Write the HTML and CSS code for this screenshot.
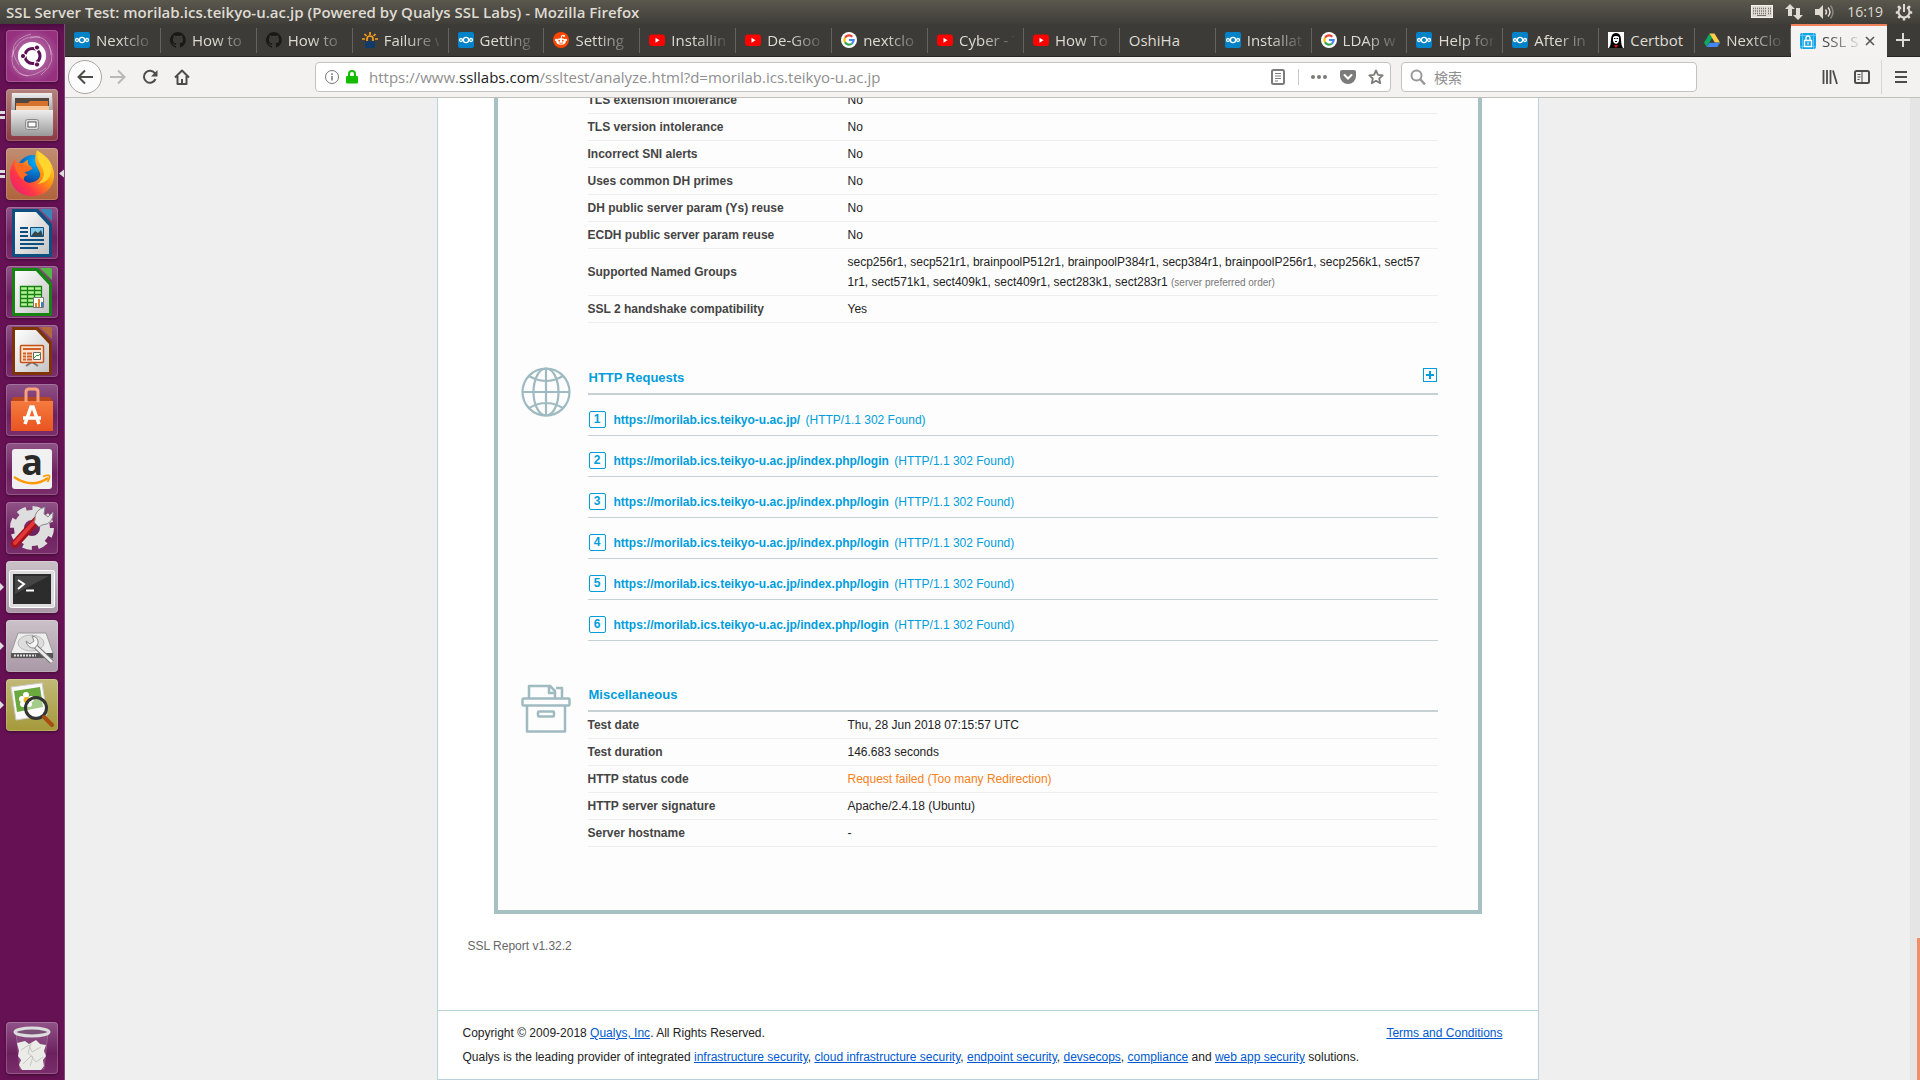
FILE: index.html
```html
<!DOCTYPE html>
<html lang="en">
<head>
<meta charset="utf-8">
<title>SSL Server Test: morilab.ics.teikyo-u.ac.jp (Powered by Qualys SSL Labs)</title>
<link rel="stylesheet" href="styles.css">
</head>
<body>
<svg class="defs" aria-hidden="true">
  <defs>
    <linearGradient id="paper" x1="0" y1="0" x2="1" y2="1"><stop offset="0" stop-color="#fff"/><stop offset="1" stop-color="#c4c4c4"/></linearGradient>
    <linearGradient id="metal" x1="0" y1="0" x2="0" y2="1"><stop offset="0" stop-color="#eee"/><stop offset="1" stop-color="#999"/></linearGradient>
    <linearGradient id="fox" x1="1" y1="0" x2="0" y2="1"><stop offset="0" stop-color="#fff44f"/><stop offset=".4" stop-color="#ff980e"/><stop offset=".7" stop-color="#ff3647"/><stop offset="1" stop-color="#e31587"/></linearGradient>
    <radialGradient id="globeblue" cx=".6" cy=".2" r=".9"><stop offset="0" stop-color="#00b4ff"/><stop offset="1" stop-color="#10217f"/></radialGradient>
    <linearGradient id="bag" x1="0" y1="0" x2="0" y2="1"><stop offset="0" stop-color="#f47b3e"/><stop offset="1" stop-color="#e95420"/></linearGradient>
  </defs>
  <symbol id="fav-nextcloud" viewBox="0 0 16 16"><rect width="16" height="16" rx="2" fill="#0082c9"/><g fill="none" stroke="#fff" stroke-width="1.3"><circle cx="8" cy="8" r="2.6"/><circle cx="3" cy="8" r="1.5"/><circle cx="13" cy="8" r="1.5"/></g></symbol>
  <symbol id="fav-github" viewBox="0 0 16 16"><path fill="#1b1817" d="M8 0a8 8 0 0 0-2.5 15.6c.4.1.5-.2.5-.4v-1.400c-2.200.5-2.700-1-2.700-1-.4-.9-.9-1.200-.9-1.200-.7-.5.1-.5.1-.5.8.1 1.200.8 1.200.8.7 1.300 1.900.9 2.300.7.1-.5.3-.9.5-1.100-1.800-.2-3.600-.9-3.600-4 0-.9.3-1.600.8-2.100-.1-.2-.4-1 .1-2.100 0 0 .7-.2 2.200.8a7.500 7.500 0 0 1 4 0c1.500-1 2.200-.8 2.200-.8.4 1.100.2 1.900.1 2.100.5.600.8 1.300.8 2.100 0 3.100-1.900 3.700-3.700 3.900.3.3.6.8.6 1.500v2.200c0 .2.1.5.6.4A8 8 0 0 0 8 0z"/></symbol>
  <symbol id="fav-youtube" viewBox="0 0 16 16"><rect y="2.500" width="16" height="11.500" rx="3" fill="#f00"/><path d="M6.500 5.700v5l4-2.500z" fill="#fff"/></symbol>
  <symbol id="fav-google" viewBox="0 0 16 16"><circle cx="8" cy="8" r="8" fill="#fff"/><g fill="none" stroke-width="2.200"><path stroke="#ea4335" d="M4 5.700A4.700 4.700 0 0 1 11.300 4.700"/><path stroke="#fbbc05" d="M4 5.700A4.700 4.700 0 0 0 4 10.400"/><path stroke="#34a853" d="M4 10.400A4.700 4.700 0 0 0 11 11.500"/><path stroke="#4285f4" d="M11 11.500A4.700 4.700 0 0 0 12.600 8H8"/></g></symbol>
</svg>

<header class="menubar">
  <h1 class="menubar-title">SSL Server Test: morilab.ics.teikyo-u.ac.jp (Powered by Qualys SSL Labs) - Mozilla Firefox</h1>
  <div class="indicators">
    <svg width="22" height="14" viewBox="0 0 22 14"><rect x=".5" y=".5" width="21" height="12" fill="#dfdbd2" stroke="#f4f2ee"/><path stroke="#77746c" stroke-dasharray="1 1" stroke-width="1.500" d="M2 3.500h14M2 6h14M2 8.500h14M17 3.500h3M17 6h3M17 8.500h3"/><path stroke="#77746c" d="M6 10.500h9"/></svg>
    <svg width="18" height="18" viewBox="0 0 18 18" fill="#dfdbd2"><path d="M5 1 0 6h3v7h4V6h3zM13 17l5-5h-3V5h-4v7H8z"/></svg>
    <svg width="20" height="16" viewBox="0 0 20 16"><path fill="#dfdbd2" d="M0 5h4l4-4v14l-4-4H0z"/><g fill="none" stroke="#dfdbd2" stroke-width="1.500"><path d="M10.500 5.500q2 2.500 0 5M13 3.500q4 4.500 0 9"/><path stroke="#8a877f" d="M15.500 1.500q5 6.500 0 13"/></g></svg>
    <time class="clock">16:19</time>
    <svg width="18" height="18" viewBox="0 0 18 18" fill="none" stroke="#dfdbd2"><path stroke-width="2" d="M6 4.300a5.500 5.500 0 1 0 6 0M9 1v8"/><path stroke-width="2.500" d="M4.800 5 3 3.200M13.200 5 15 3.200M3.500 9.500H.8M14.500 9.500h2.700M5 13.200 3.300 15M13 13.200l1.700 1.800M9 15v2.500"/></svg>
  </div>
</header>

<div class="desktop">
  <nav class="launcher" aria-label="Launcher">
    <button class="tile tile-dash" aria-label="Search"><svg viewBox="0 0 52 52"><g fill="none" stroke="#fff" stroke-opacity=".35"><path d="M13 35Q-3 12 25 4M22 46Q2 44 7 20M40 38Q18 54 8 36M43 15q9 17-8 30M24 8q19-5 21 17M6 27Q12 4 34 7"/></g><circle cx="26" cy="26" r="14" fill="#fff"/><circle cx="26.500" cy="26" r="7.500" fill="none" stroke="#5e1155" stroke-width="3" stroke-dasharray="13.500 2.200" stroke-dashoffset="6"/><g fill="#5e1155" stroke="#fff"><circle cx="17" cy="26" r="2.600"/><circle cx="31" cy="17.500" r="2.600"/><circle cx="31" cy="34.500" r="2.600"/></g></svg></button>
    <button class="tile tile-files pips" aria-label="Files"><svg viewBox="0 0 52 52"><path d="M6 4h40l1 20H5z" fill="url(#metal)"/><path d="M9 9h34v14H9z" fill="#514740"/><path d="M10 14h12l2-2h18v11H10z" fill="#d5722c"/><path d="M10 17h33v5H10z" fill="#f7c799"/><path d="M5 21h42v24a2 2 0 0 1-2 2H7a2 2 0 0 1-2-2z" fill="url(#metal)"/><rect x="19.500" y="30.500" width="13" height="10" rx="2" fill="#ddd" stroke="#888"/><rect x="22" y="33" width="8" height="5" fill="#fff" stroke="#555"/></svg></button>
    <button class="tile tile-firefox pips" aria-label="Firefox"><svg viewBox="0 0 52 52"><circle cx="27" cy="23" r="16" fill="url(#globeblue)"/><path fill="url(#fox)" d="M32 3c8 5 15 12 16 22 1 14-9 23-22 23S4 39 4 26c0-7 3-11 5-16l1 6 7-1c2-1 3-3 5-3-1 3 1 6 4 7-2 2-6 2-7 5l-3 5c2 5 7 7 11 5 5-1 8-5 7-9-1-5-8-10-3-23z"/><path fill="#ff6b22" d="M8 16q7-3 10 1l9 3q-4 4-9 4l4 3q-5 1-4 5-6-2-10-16z"/><path fill="#ffd52e" d="M32 3c-3 10 5 14 6 22 0 5-3 9-7 11 11-1 16-9 14-20-2-6-8-9-13-13z"/><path fill="#ddd" d="M58 21.500v8L53 25.500z"/></svg></button>
    <button class="tile" aria-label="LibreOffice Writer"><svg viewBox="0 0 52 52"><path d="M6 2h26l14 15v31a2 2 0 0 1-2 2H8a2 2 0 0 1-2-2z" fill="#0d4f7e"/><path d="M9 5h21l13 14v28H9z" fill="url(#paper)"/><path d="M34 2h10a2 2 0 0 1 2 2v10z" fill="#3986b8"/><path stroke="#0d4f7e" stroke-width="2" d="M14 21h8M14 25h8M14 29h8M14 33h24M14 37h24M14 41h18"/><path d="M24.500 20.500h13v9h-13z" fill="#85c9ea" stroke="#0d4f7e"/><path d="m25 29 4-5 3 2 3-3 2 6z" fill="#33474a"/></svg></button>
    <button class="tile" aria-label="LibreOffice Calc"><svg viewBox="0 0 52 52"><path d="M6 2h26l14 15v31a2 2 0 0 1-2 2H8a2 2 0 0 1-2-2z" fill="#178312"/><path d="M9 5h21l13 14v28H9z" fill="url(#paper)"/><path d="M34 2h10a2 2 0 0 1 2 2v10z" fill="#55b744"/><path fill="#b7f19a" stroke="#178312" stroke-width="1.300" d="M14.500 20.500h21v20h-21zM21.500 20.500v20M28.500 20.500v20M14.500 24.500h21M14.500 28.500h21M14.500 32.500h21M14.500 36.500h21"/><path fill="#fff" stroke="#777" d="M27.500 31.500h10v10h-10z"/><path fill="#e77c20" d="M29 37h2v4h-2zM32 33h2v8h-2z"/><path fill="#2e86c1" d="M35 36h2v5h-2z"/></svg></button>
    <button class="tile" aria-label="LibreOffice Impress"><svg viewBox="0 0 52 52"><path d="M6 2h26l14 15v31a2 2 0 0 1-2 2H8a2 2 0 0 1-2-2z" fill="#7f3408"/><path d="M9 5h21l13 14v28H9z" fill="url(#paper)"/><path d="M34 2h10a2 2 0 0 1 2 2v10z" fill="#b5683b"/><path d="M20 41l6-4 6 4" stroke="#777" stroke-width="2" fill="none"/><rect x="14.500" y="20.500" width="23" height="17" rx="1" fill="#fbe3cf" stroke="#c4511a" stroke-width="1.500"/><path stroke="#d0602a" stroke-width="2" d="M17 24h18M17 28.500h3M21 28.500h5M17 31.500h3M21 31.500h5M17 34.500h3M21 34.500h5"/><path fill="#fff" stroke="#666" d="M27.500 27.500h7v7h-7z"/><path d="m28 33 3-3 1 1 3-3" stroke="#2a9b30" fill="none"/></svg></button>
    <button class="tile" aria-label="Ubuntu Software"><svg viewBox="0 0 52 52"><path d="M7 13 5 18h42l-3-5z" fill="#b9471d"/><path d="M5 17h42v30H5z" fill="url(#bag)"/><path d="M20 18V8q0-3 3-3h6q3 0 3 3v10" fill="none" stroke="#f7a27c" stroke-width="3"/><g fill="none" stroke="#fff" stroke-width="3.500"><path d="m19 40 6-17h2l6 17"/><path d="M17 34h18"/></g></svg></button>
    <button class="tile" aria-label="Amazon"><svg viewBox="0 0 52 52"><rect x="6" y="6" width="40" height="40" rx="3" fill="#f1f1f1"/><text x="26" y="32" class="amazon-a" text-anchor="middle">a</text><path d="M8 34q18 12 34 1" fill="none" stroke="#f90" stroke-width="2.500"/><path d="M37 33.500q6-2 6.500-.5t-2 6" fill="none" stroke="#f90" stroke-width="1.800"/></svg></button>
    <button class="tile" aria-label="System Settings"><svg viewBox="0 0 52 52"><circle cx="26" cy="26" r="19.500" fill="none" stroke="#dedede" stroke-width="5" stroke-dasharray="9 6.300"/><circle cx="26" cy="26" r="13" fill="none" stroke="#dedede" stroke-width="10"/><path d="m9 42 23-25" stroke="#a5131b" stroke-width="8" stroke-linecap="round"/><path d="m9 41 22-24" stroke="#e0383b" stroke-width="4" stroke-linecap="round"/><path d="M29 18q-1-10 10-13l-1 7 4 3 5-5q1 12-11 13l-3 2-5-5z" fill="#e6e6e6" stroke="#8a8a8a"/></svg></button>
    <button class="tile tile-grey pip" aria-label="Terminal"><svg viewBox="0 0 52 52"><rect x="3.500" y="9.500" width="45" height="37" rx="2" fill="#ddd" stroke="#fff"/><path d="M7 13h38v30H7z" fill="#2c2c2c"/><path d="M9 15h34L9 33z" fill="#454545"/><path d="m12 19 6 4-6 5M20 29.500h8" fill="none" stroke="#fff" stroke-width="2"/></svg></button>
    <button class="tile tile-grey pip" aria-label="Disks"><svg viewBox="0 0 52 52"><path d="m12 13h28l7 20v5H5v-5z" fill="#eee" stroke="#999"/><path d="M5 33h42v5H5z" fill="#555"/><path d="M8 35.500h22" stroke="#ddd" stroke-width="2" stroke-dasharray="2 1"/><ellipse cx="25" cy="23" rx="13" ry="8" fill="#ddd" stroke="#bbb"/><path d="m29 26 17 16" stroke="#777" stroke-width="5"/><path d="m29 26 17 16" stroke="#eee" stroke-width="3"/><path d="M20 21q2 8 9 7l3-4q1-7-6-8l2 5-4 3z" fill="#f4f4f4" stroke="#888"/></svg></button>
    <button class="tile tile-olive pip" aria-label="Image Viewer"><svg viewBox="0 0 52 52"><path d="m5 8 31-4 5 32-31 5z" fill="#fafafa" stroke="#ccc"/><path d="m8 12 26-4 3 20-26 5z" fill="#69a93d"/><g fill="#fff"><circle cx="16" cy="20" r="3"/><circle cx="20" cy="16" r="3"/><circle cx="25" cy="20" r="3"/><circle cx="23" cy="25" r="3"/><circle cx="17" cy="25" r="3"/></g><circle cx="20.500" cy="21" r="3" fill="#eeb51f"/><circle cx="30" cy="29" r="10.500" fill="#fff" fill-opacity=".4" stroke="#333" stroke-width="3"/><path d="m38 38 8 8" stroke="#a74d13" stroke-width="4" stroke-linecap="round"/></svg></button>
    <button class="tile tile-trash" aria-label="Trash"><svg viewBox="0 0 52 52"><path d="M10 10h32l-4 37H14z" fill="#fff" fill-opacity=".08" stroke="#fff" stroke-opacity=".2"/><path d="m11 21 8-2 4 3 7-4 4 4 6 1-2 6 2 5-3 4 1 6-3 4H16l-3-5 2-5-3-4 1-5z" fill="#ebebe8"/><path d="m15 28 8-5 3 7 9-5M17 42l8-8 5 6 7-5M25 21l-3 10 5 4-3 9" stroke="#c6c6c3" fill="none"/><ellipse cx="26" cy="10" rx="17" ry="4" fill="#7a5278" stroke="#ddd" stroke-width="3"/></svg></button>
  </nav>

  <div class="browser">
    <div class="tabs" role="tablist">
      <button class="tab" role="tab"><svg class="fav"><use href="#fav-nextcloud"/></svg><span>Nextclo</span></button>
      <button class="tab" role="tab"><svg class="fav"><use href="#fav-github"/></svg><span>How to</span></button>
      <button class="tab" role="tab"><svg class="fav"><use href="#fav-github"/></svg><span>How to</span></button>
      <button class="tab" role="tab"><svg class="fav" viewBox="0 0 16 16"><path fill="#123a69" d="M3 9h10v7H3z"/><path fill="none" stroke="#f9a01b" stroke-width="1.700" d="M5 9V7a3 3 0 0 1 6 0v2M8 3V0M4.500 4 2.500 2M11.500 4l2-2M3 7H0M13 7h3"/></svg><span>Failure w</span></button>
      <button class="tab" role="tab"><svg class="fav"><use href="#fav-nextcloud"/></svg><span>Getting</span></button>
      <button class="tab" role="tab"><svg class="fav" viewBox="0 0 16 16"><circle cx="8" cy="8" r="8" fill="#ff4500"/><ellipse cx="8" cy="9.500" rx="4.700" ry="3.300" fill="#fff"/><g fill="#fff"><circle cx="3.200" cy="8" r="1.300"/><circle cx="12.800" cy="8" r="1.300"/><circle cx="11" cy="3.800" r="1.100"/></g><path stroke="#fff" fill="none" d="M8 7l.7-3.500 2 .4"/><g fill="#ff4500"><circle cx="6.200" cy="8.700" r=".9"/><circle cx="9.800" cy="8.700" r=".9"/></g><path stroke="#ff4500" fill="none" stroke-width=".8" d="M6 10.800q2 1.200 4 0"/></svg><span>Setting</span></button>
      <button class="tab" role="tab"><svg class="fav"><use href="#fav-youtube"/></svg><span>Installin</span></button>
      <button class="tab" role="tab"><svg class="fav"><use href="#fav-youtube"/></svg><span>De-Goo</span></button>
      <button class="tab" role="tab"><svg class="fav"><use href="#fav-google"/></svg><span>nextclo</span></button>
      <button class="tab" role="tab"><svg class="fav"><use href="#fav-youtube"/></svg><span>Cyber - T</span></button>
      <button class="tab" role="tab"><svg class="fav"><use href="#fav-youtube"/></svg><span>How To</span></button>
      <button class="tab" role="tab"><span class="whole">OshiHa</span></button>
      <button class="tab" role="tab"><svg class="fav"><use href="#fav-nextcloud"/></svg><span>Installat</span></button>
      <button class="tab" role="tab"><svg class="fav"><use href="#fav-google"/></svg><span>LDAp w</span></button>
      <button class="tab" role="tab"><svg class="fav"><use href="#fav-nextcloud"/></svg><span>Help for</span></button>
      <button class="tab" role="tab"><svg class="fav"><use href="#fav-nextcloud"/></svg><span>After in</span></button>
      <button class="tab" role="tab"><svg class="fav" viewBox="0 0 16 16"><path fill="#fff" d="M0 0h16v16H0z"/><path d="M1 16q2-3 2-8 0-7 5-7t5 7q0 5 2 8z"/><path fill="#fff" d="M5 5q3-2 6 0v4q-1 3-3 3t-3-3z"/><path stroke="#000" d="M6 6.500h1.500M8.500 6.500H10M7 9.500h2"/><path fill="#e11" d="M6 13h4l-2 3z"/></svg><span class="whole">Certbot</span></button>
      <button class="tab" role="tab"><svg class="fav" viewBox="0 0 16 16"><path fill="#0da960" d="m5.500 1.500 2.600 4.600L2.700 15 0 10.700z"/><path fill="#ffcf48" d="M5.500 1.500h5l5.500 9h-5.200z"/><path fill="#4285f4" d="M5.500 10.700H16L13.400 15H2.700z"/></svg><span>NextClo</span></button>
      <button class="tab selected" role="tab" aria-selected="true"><svg class="fav" viewBox="0 0 16 16"><rect width="16" height="16" rx="2" fill="#12a5e8"/><path stroke="#58c4f2" d="M2.500 0v16M13.500 0v16M0 2.500h16M0 13.500h16"/><path fill="none" stroke="#fff" stroke-width="1.400" d="M4.500 7.500h7v6h-7zM6 7V5a2 2 0 0 1 4 0v2M8 9.500v2"/></svg><span>SSL S</span><svg width="12" height="10" viewBox="0 0 12 10"><path d="m1 1 8 8M9 1 1 9" stroke="#555" stroke-width="1.600"/></svg></button>
      <button class="newtab" aria-label="New tab"><svg width="14" height="14" viewBox="0 0 14 14"><path d="M7 0v14M0 7h14" stroke="#dcdad5" stroke-width="2"/></svg></button>
    </div>

    <div class="toolbar">
      <button class="back" aria-label="Back"><svg width="16" height="16" viewBox="0 0 16 16"><path d="M8 1.500 1.500 8 8 14.500M2 8h14" stroke="#4c4c4a" stroke-width="2" fill="none"/></svg></button>
      <button class="tool" aria-label="Forward"><svg width="16" height="16" viewBox="0 0 16 16"><path d="M8 1.500 14.500 8 8 14.500M14 8H0" stroke="#b9b8b5" stroke-width="2" fill="none"/></svg></button>
      <button class="tool" aria-label="Reload"><svg width="16" height="16" viewBox="0 0 16 16"><path d="M13 4.500A6 6 0 1 0 13.500 10" stroke="#4c4c4a" stroke-width="2" fill="none"/><path d="M15.500 1v6.500H9z" fill="#4c4c4a"/></svg></button>
      <button class="tool" aria-label="Home"><svg width="16" height="16" viewBox="0 0 16 16"><path d="m1 8.500 7-7 7 7M3.500 7v8h9V7" stroke="#4c4c4a" stroke-width="2" fill="none" stroke-linejoin="round"/><path d="M7 10h2v5H7z" fill="#4c4c4a"/></svg></button>
      <div class="field urlbar">
        <svg width="16" height="16" viewBox="0 0 16 16"><circle cx="8" cy="8" r="6.500" fill="none" stroke="#777"/><path d="M8 7v4.500M8 4.300V6" stroke="#777" stroke-width="1.500"/></svg>
        <svg width="14" height="16" viewBox="0 0 14 16"><path d="M4 8V5a3 3 0 0 1 6 0v3" fill="none" stroke="#12bc00" stroke-width="2"/><rect x="1" y="7" width="12" height="7.500" rx="1" fill="#12bc00"/></svg>
        <a class="url" href="#">https://www.<b>ssllabs.com</b>/ssltest/analyze.html?d=morilab.ics.teikyo-u.ac.jp</a>
        <button class="mini reader" aria-label="Reader view"><svg width="16" height="16" viewBox="0 0 16 16"><rect x="2" y="1" width="12" height="14" rx="1.500" fill="none" stroke="#7b7b7a" stroke-width="2"/><path d="M5 4.500h6M5 7h6M5 9.500h6M5 12h3" stroke="#7b7b7a"/></svg></button>
        <button class="mini" aria-label="Page actions"><svg width="18" height="16" viewBox="0 0 18 16" fill="#7b7b7a"><circle cx="3" cy="8" r="2"/><circle cx="9" cy="8" r="2"/><circle cx="15" cy="8" r="2"/></svg></button>
        <button class="mini" aria-label="Save to Pocket"><svg width="16" height="16" viewBox="0 0 16 16"><path d="M2 1h12a2 2 0 0 1 2 2v4a8 8 0 0 1-16 0V3a2 2 0 0 1 2-2z" fill="#7b7b7a"/><path d="m4.500 6 3.500 3.500L11.500 6" fill="none" stroke="#fff" stroke-width="2" stroke-linecap="round"/></svg></button>
        <button class="mini" aria-label="Bookmark"><svg width="16" height="16" viewBox="0 0 16 16"><path d="m8 1.500 2 4.300 4.700.5-3.500 3.200 1 4.700L8 11.800l-4.200 2.400 1-4.700-3.500-3.200 4.700-.5z" fill="none" stroke="#7b7b7a" stroke-width="1.800" stroke-linejoin="round"/></svg></button>
      </div>
      <label class="field search">
        <svg width="16" height="16" viewBox="0 0 16 16"><circle cx="6.500" cy="6.500" r="5" fill="none" stroke="#999" stroke-width="2"/><path d="m10 10 5 5.500" stroke="#999" stroke-width="2.500"/></svg>
        <input type="search" placeholder="検索" aria-label="検索">
      </label>
      <button class="tool library" aria-label="Library"><svg width="16" height="16" viewBox="0 0 16 16"><path d="M1.500 1v14M5 1v14M8.500 1v14M11 1.500 15 15" stroke="#4c4c4a" stroke-width="1.800"/></svg></button>
      <button class="tool" aria-label="Sidebars"><svg width="16" height="16" viewBox="0 0 16 16"><rect x="1" y="2" width="14" height="12" rx="1.500" fill="none" stroke="#4c4c4a" stroke-width="2"/><path d="M8 2v12M3.500 5.500h3M3.500 8h3M3.500 10.500h2" stroke="#4c4c4a"/></svg></button>
      <button class="menu" aria-label="Menu"><svg width="14" height="14" viewBox="0 0 14 14"><path d="M1 2h12M1 7h12M1 12h12" stroke="#4c4c4a" stroke-width="2"/></svg></button>
    </div>

    <div class="viewport">
      <div class="scroll">
        <main class="page">
          <div class="report">
            <section class="section">
              <table class="facts">
                <tr><th scope="row">TLS extension intolerance</th><td>No</td></tr>
                <tr><th scope="row">TLS version intolerance</th><td>No</td></tr>
                <tr><th scope="row">Incorrect SNI alerts</th><td>No</td></tr>
                <tr><th scope="row">Uses common DH primes</th><td>No</td></tr>
                <tr><th scope="row">DH public server param (Ys) reuse</th><td>No</td></tr>
                <tr><th scope="row">ECDH public server param reuse</th><td>No</td></tr>
                <tr><th scope="row">Supported Named Groups</th><td>secp256r1, secp521r1, brainpoolP512r1, brainpoolP384r1, secp384r1, brainpoolP256r1, secp256k1, sect57<br>1r1, sect571k1, sect409k1, sect409r1, sect283k1, sect283r1 <small>(server preferred order)</small></td></tr>
                <tr><th scope="row">SSL 2 handshake compatibility</th><td>Yes</td></tr>
              </table>
            </section>

            <section class="section">
              <svg class="section-icon" viewBox="0 0 50 50" fill="none" stroke="#a0bac2" stroke-width="2.200"><circle cx="25" cy="25" r="23.500"/><ellipse cx="25" cy="25" rx="12.500" ry="23.500"/><path d="M25 1v48M1 25h48M8 9q17 10 34 0M8 41q17-10 34 0"/></svg>
              <div class="section-body">
                <div class="section-head"><h2>HTTP Requests</h2><button class="expand" aria-label="Expand"><svg width="8" height="8" viewBox="0 0 8 8"><path d="M4 0v8M0 4h8" stroke="#009ddc" stroke-width="2"/></svg></button></div>
                <ol class="requests">
                  <li><span class="num">1</span><a href="#"><b>https://morilab.ics.teikyo-u.ac.jp/</b> <span>(HTTP/1.1 302 Found)</span></a></li>
                  <li><span class="num">2</span><a href="#"><b>https://morilab.ics.teikyo-u.ac.jp/index.php/login</b> <span>(HTTP/1.1 302 Found)</span></a></li>
                  <li><span class="num">3</span><a href="#"><b>https://morilab.ics.teikyo-u.ac.jp/index.php/login</b> <span>(HTTP/1.1 302 Found)</span></a></li>
                  <li><span class="num">4</span><a href="#"><b>https://morilab.ics.teikyo-u.ac.jp/index.php/login</b> <span>(HTTP/1.1 302 Found)</span></a></li>
                  <li><span class="num">5</span><a href="#"><b>https://morilab.ics.teikyo-u.ac.jp/index.php/login</b> <span>(HTTP/1.1 302 Found)</span></a></li>
                  <li><span class="num">6</span><a href="#"><b>https://morilab.ics.teikyo-u.ac.jp/index.php/login</b> <span>(HTTP/1.1 302 Found)</span></a></li>
                </ol>
              </div>
            </section>

            <section class="section">
              <svg class="section-icon" viewBox="0 0 50 50" fill="none" stroke="#a0bac2" stroke-width="2.500" stroke-linejoin="round"><rect x="1.500" y="14.500" width="47" height="7" rx="1"/><path d="M6 22v25.500h38V22M8 14V2h21l5 5v7M28 2v7h6M35 4h6v10"/><rect x="17" y="27.500" width="16" height="5" rx="1"/></svg>
              <div class="section-body">
                <div class="section-head"><h2>Miscellaneous</h2></div>
                <table class="facts">
                  <tr><th scope="row">Test date</th><td>Thu, 28 Jun 2018 07:15:57 UTC</td></tr>
                  <tr><th scope="row">Test duration</th><td>146.683 seconds</td></tr>
                  <tr><th scope="row">HTTP status code</th><td class="warn">Request failed (Too many Redirection)</td></tr>
                  <tr><th scope="row">HTTP server signature</th><td>Apache/2.4.18 (Ubuntu)</td></tr>
                  <tr><th scope="row">Server hostname</th><td>-</td></tr>
                </table>
              </div>
            </section>
          </div>
          <p class="version">SSL Report v1.32.2</p>
          <footer class="footer">
            <div class="footer-row"><span>Copyright © 2009-2018 <a href="#">Qualys, Inc</a>. All Rights Reserved.</span><a href="#">Terms and Conditions</a></div>
            <div class="footer-row"><span>Qualys is the leading provider of integrated <a href="#">infrastructure security</a>, <a href="#">cloud infrastructure security</a>, <a href="#">endpoint security</a>, <a href="#">devsecops</a>, <a href="#">compliance</a> and <a href="#">web app security</a> solutions.</span></div>
          </footer>
        </main>
      </div>
      <div class="scrollbar"><div class="thumb"></div></div>
    </div>
  </div>
</div>
</body>
</html>
```

FILE: styles.css
```css
* { box-sizing: border-box; }

body {
  margin: 0;
  height: 100vh;
  display: flex;
  flex-direction: column;
  overflow: hidden;
  font-family: "Liberation Sans", "Noto Sans CJK JP", sans-serif;
  font-size: 12px;
  color: #222;
}

button {
  padding: 0;
  border: 0;
  background: none;
  font: inherit;
  color: inherit;
}

svg { display: block; flex: none; }
.defs { position: absolute; width: 0; height: 0; }

/* Top panel */
.menubar {
  flex: none;
  height: 24px;
  display: flex;
  align-items: center;
  justify-content: space-between;
  padding: 0 7px 0 6px;
  background: linear-gradient(#5a574d, #3f3e39);
  color: #dfdbd2;
  font-family: "Open Sans", sans-serif;
}
.menubar-title { margin: 0; font-size: 15px; font-weight: 600; line-height: 22px; }
.indicators { display: flex; align-items: center; gap: 12px; }
.clock { font-size: 14px; line-height: 24px; }

.desktop { flex: 1; min-height: 0; display: flex; }

/* Launcher */
.launcher {
  flex: none;
  width: 65px;
  display: flex;
  flex-direction: column;
  gap: 7px;
  padding: 6px;
  background: linear-gradient(#4d0b42, #651153 8px);
  border-right: 1px solid #85487a;
}
.tile {
  position: relative;
  flex: none;
  width: 52px;
  height: 52px;
  border-radius: 4px;
  background: linear-gradient(#8f5387, #6d205f 60%, #7a2f6c);
  box-shadow: inset 0 0 0 1px #ffffff30, 0 1px 3px #00000060;
}
.tile svg { width: 52px; height: 52px; overflow: visible; }
.tile-dash { background: radial-gradient(#c088b8, #96307f 75%); }
.tile-files { background: linear-gradient(#b3827c, #8c3944); }
.tile-firefox { background: linear-gradient(#c08e72, #b0633c); }
.tile-grey { background: linear-gradient(#cbc1c8, #a998a6); }
.tile-olive { background: linear-gradient(#c0b977, #a5993a); }
.tile-trash { margin-top: auto; }
.amazon-a { font: bold 36px "Open Sans", sans-serif; fill: #2a2a2a; }

/* Running-window marks on the launcher's left edge */
.pip::before {
  content: "";
  position: absolute;
  left: -6px;
  top: 22px;
  border: 4px solid transparent;
  border-left-color: #ddd;
  border-right: 0;
}
.pips::before, .pips::after {
  content: "";
  position: absolute;
  left: -6px;
  top: 22px;
  width: 5px;
  height: 3px;
  background: #ddd;
}
.pips::after { top: 27px; }

/* Tabs */
.browser { flex: 1; min-width: 0; display: flex; flex-direction: column; }
.tabs {
  flex: none;
  height: 33px;
  display: flex;
  background: #3c3b37;
  border-bottom: 1px solid #282724;
  font-family: "Open Sans", sans-serif;
  font-size: 15px;
  color: #dfdbd2;
}
.tab {
  flex: 1 1 0;
  min-width: 0;
  display: flex;
  align-items: center;
  gap: 6px;
  padding: 0 9px;
  border-right: 1px solid;
  border-image: linear-gradient(transparent 5px, #64635f 5px, #64635f 28px, transparent 28px) 1;
  text-align: left;
}
.fav { width: 16px; height: 16px; }
.tab span {
  flex: 1;
  min-width: 0;
  overflow: hidden;
  white-space: nowrap;
  -webkit-mask-image: linear-gradient(90deg, #000 calc(100% - 32px), #0002);
  mask-image: linear-gradient(90deg, #000 calc(100% - 32px), #0002);
}
.tab span.whole { -webkit-mask-image: none; mask-image: none; }
.tab.selected {
  margin-bottom: -1px;
  padding-right: 10px;
  border: 0;
  border-image: none;
  background: linear-gradient(#f0805a 2px, #f4f3f1 2px);
  color: #444;
}
.newtab { width: 33px; display: grid; place-items: center; }

/* Toolbar */
.toolbar {
  flex: none;
  height: 41px;
  display: flex;
  align-items: center;
  padding-left: 3px;
  background: #f3f2f0;
  border-bottom: 1px solid #bfbfbb;
}
.back {
  width: 34px;
  height: 34px;
  display: grid;
  place-items: center;
  background: #fcfcfc;
  border: 1px solid #a7a6a3;
  border-radius: 50%;
}
.tool { width: 32px; height: 32px; display: grid; place-items: center; }
.field {
  height: 30px;
  display: flex;
  align-items: center;
  background: #fff;
  border: 1px solid #c3c2bf;
  border-radius: 4px;
}
.urlbar { flex: 1; min-width: 0; margin-left: 117px; padding: 0 6px 0 8px; gap: 5px; }
.url {
  flex: 1;
  min-width: 0;
  margin-left: 5px;
  overflow: hidden;
  white-space: nowrap;
  font-family: "Open Sans", sans-serif;
  font-size: 15px;
  color: #8f8f8f;
  text-decoration: none;
}
.url b { font-weight: 400; color: #1c1c1c; }
.mini { margin-left: 7px; }
.reader { padding-right: 12px; margin-right: -1px; border-right: 1px solid #c8c8c6; }
.search { width: 296px; margin-left: 10px; padding: 0 8px; gap: 8px; }
.search input {
  flex: 1;
  min-width: 0;
  padding: 0;
  border: 0;
  background: none;
  font: 14px "Noto Sans CJK JP", sans-serif;
}
.search input::placeholder { color: #8f8f8f; }
.library { margin-left: 117px; }
.menu {
  width: 39px;
  height: 34px;
  margin-left: 3px;
  display: grid;
  place-items: center;
  border-left: 1px solid #d6d5d2;
}

/* Web page, scrolled to its end */
.viewport { flex: 1; min-height: 0; display: flex; background: #efefef; }
.scroll {
  flex: 1;
  min-width: 0;
  display: flex;
  justify-content: center;
  align-items: flex-end;
  overflow: hidden;
}
.scrollbar { width: 10px; display: flex; align-items: flex-end; justify-content: flex-end; background: #e5e5e5; }
.thumb { width: 3px; height: 14.5%; background: #f0906a; }

.page { width: 1102px; background: #fff; border: 1px solid #bad3da; border-top: 0; }
.report {
  margin: 0 56px;
  padding: 0 40px 63px 23px;
  background: #fdfdfd;
  border: 4px solid #a7c0c4;
  border-top: 0;
}
.section { display: flex; gap: 17px; margin-bottom: 43px; }
.section:first-child { padding-left: 67px; margin-bottom: 44px; }
.section:last-child { margin-bottom: 0; }
.section-icon { width: 50px; height: 50px; }
.section-body { flex: 1; min-width: 0; }
.section-head {
  height: 28px;
  display: flex;
  align-items: flex-start;
  justify-content: space-between;
  padding: 1px 1px 0;
  border-bottom: 2px solid #c6d1d3;
}
.section-head h2 { margin: 0; font-size: 13px; line-height: 20px; color: #009ddc; }
.expand {
  width: 14px;
  height: 14px;
  display: grid;
  place-items: center;
  border: 1px solid #009ddc;
}

.facts { width: 100%; border-collapse: collapse; table-layout: fixed; line-height: 20px; }
.facts th, .facts td { padding: 3px 0; border-bottom: 1px solid #eee; text-align: left; }
.facts th { width: 260px; color: #444; }
.facts small { font-size: 10px; line-height: 12px; color: #777; }
.facts .warn { color: #f88017; }

.requests { margin: 0; padding: 0; list-style: none; }
.requests li {
  height: 41px;
  display: flex;
  align-items: flex-end;
  gap: 8px;
  padding: 0 1px 7px;
  border-bottom: 1px solid #c6d1d3;
  line-height: 16px;
  color: #009ddc;
}
.requests a { color: inherit; text-decoration: none; }
.requests a span { margin-left: 2px; }
.num {
  width: 17px;
  height: 17px;
  border: 1px solid #009ddc;
  border-radius: 2px;
  font-weight: 700;
  line-height: 15px;
  text-align: center;
}

.version { margin: 0; padding: 22px 30px 54px; line-height: 20px; color: #666; }
.footer { padding: 10px 35px 10px 25px; border-top: 1px solid #bad3da; line-height: 24px; }
.footer-row { display: flex; justify-content: space-between; }
.footer a { color: #0059d0; }
```
